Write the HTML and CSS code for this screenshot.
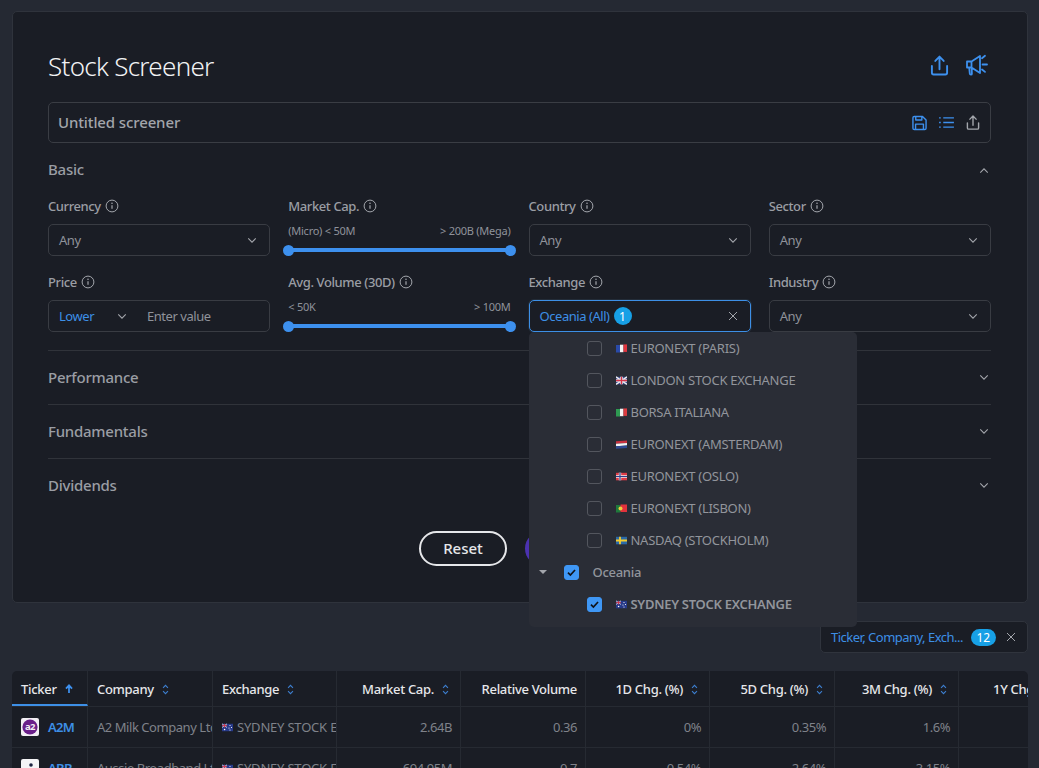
FILE: index.html
```html
<!DOCTYPE html>
<html lang="en">
<head>
<meta charset="utf-8">
<title>Stock Screener</title>
<link rel="stylesheet" href="styles.css">
</head>
<body>
<svg class="defs" width="0" height="0" aria-hidden="true">
  <symbol id="info" viewBox="0 0 14 14"><circle cx="7" cy="7" r="5.9" fill="none" stroke="currentColor" stroke-width="1"/><path d="M7 6.2v3.6" stroke="currentColor" stroke-width="1.2" fill="none"/><circle cx="7" cy="4.3" r=".8" fill="currentColor"/></symbol>
  <symbol id="down" viewBox="0 0 12 8"><path d="M1.500 1.500 6 6l4.500-4.500" fill="none" stroke="currentColor" stroke-width="1.300"/></symbol>
  <symbol id="up" viewBox="0 0 12 8"><path d="M1.500 6.500 6 2l4.500 4.500" fill="none" stroke="currentColor" stroke-width="1.300"/></symbol>
  <symbol id="close" viewBox="0 0 10 10"><path d="M1 1l8 8M9 1 1 9" fill="none" stroke="currentColor" stroke-width="1"/></symbol>
  <symbol id="share" viewBox="0 0 20 22"><path d="M2 11.500v7.200c0 1 .8 1.800 1.800 1.800h12.400c1 0 1.800-.8 1.800-1.800v-7.200M10 15V2M5.600 6.200 10 1.600l4.400 4.600" fill="none" stroke="currentColor" stroke-width="2" stroke-linecap="round" stroke-linejoin="round"/></symbol>
  <symbol id="horn" viewBox="0 0 22 22"><path d="M1 7.500h4.500v6H1zM5.500 7.500 14 2v17l-8.500-5.500zM3.200 13.500l.6 6.200c.1 1.300 2.100 1.300 2.100 0l-.2-5.800M16 4.200l3-2.400M16.500 10.500H21M16 15.500l3 2.400" fill="none" stroke="currentColor" stroke-width="1.800" stroke-linecap="round" stroke-linejoin="round"/></symbol>
  <symbol id="save" viewBox="0 0 16 16"><path d="M1 2.500C1 1.700 1.700 1 2.500 1h8.700L15 4.800v8.700c0 .8-.7 1.500-1.500 1.500h-11C1.700 15 1 14.300 1 13.500zM4 1v3.800h6.500V1M3.800 15V9.200h8.400V15" fill="none" stroke="currentColor" stroke-width="1.500" stroke-linejoin="round"/></symbol>
  <symbol id="list" viewBox="0 0 16 14"><path d="M4.500 2H16M4.500 7H16M4.500 12H16M0 2h1.800M0 7h1.800M0 12h1.800" fill="none" stroke="currentColor" stroke-width="1.500"/></symbol>
  <symbol id="sort" viewBox="0 0 8 12"><path d="M1.200 4.200 4 1.200l2.800 3M1.200 7.800 4 10.800l2.800-3" fill="none" stroke="currentColor" stroke-width="1.200"/></symbol>
  <symbol id="arrow" viewBox="0 0 10 12"><path d="M5 11V2M1.200 5.500 5 1.500l3.800 4" fill="none" stroke="currentColor" stroke-width="2.200"/></symbol>
  <symbol id="check" viewBox="0 0 14 14"><path d="M3.200 7.200 5.800 9.800 10.800 4.300" fill="none" stroke="currentColor" stroke-width="1.800"/></symbol>
  <symbol id="f-fr" viewBox="0 0 11 9"><path fill="#2a4aa8" d="M0 1h4v7.500H0z"/><path fill="#f4f4f4" d="M4 .7h3.500v7.500H4z"/><path fill="#e1353f" d="M7.500.4H11v7.500H7.500z"/></symbol>
  <symbol id="f-uk" viewBox="0 0 11 9"><path fill="#3a4c94" d="M0 .8h11v7.500H0z"/><path d="M0 .8l11 7.500M11 .8 0 8.300" stroke="#eee" stroke-width="1.500"/><path d="M5.500.8v7.500M0 4.500h11" stroke="#eee" stroke-width="2.600"/><path d="M5.500.8v7.500M0 4.500h11" stroke="#d3344a" stroke-width="1.300"/></symbol>
  <symbol id="f-it" viewBox="0 0 11 9"><path fill="#2e9a52" d="M0 1h4v7.500H0z"/><path fill="#f4f4f4" d="M4 .7h3.500v7.500H4z"/><path fill="#dc3b40" d="M7.500.4H11v7.500H7.500z"/></symbol>
  <symbol id="f-nl" viewBox="0 0 11 9"><path fill="#c8303f" d="M0 1.300 11 .4v2.700L0 3.800z"/><path fill="#f4f4f4" d="M0 3.800 11 3.100v2.500L0 6.300z"/><path fill="#2e4a94" d="M0 6.300 11 5.600v2.500L0 8.800z"/></symbol>
  <symbol id="f-no" viewBox="0 0 11 9"><path fill="#dc3b46" d="M0 .8h11v7.500H0z"/><path d="M4 .8v7.500M0 4.500h11" stroke="#eee" stroke-width="2.400"/><path d="M4 .8v7.500M0 4.500h11" stroke="#2c3f8c" stroke-width="1.200"/></symbol>
  <symbol id="f-pt" viewBox="0 0 11 9"><path fill="#1f7a3c" d="M0 1h4.500v7.500H0z"/><path fill="#e2323c" d="M4.500.5H11v7.500H4.500z"/><circle cx="4.500" cy="4.500" r="2" fill="#f1cd3e"/></symbol>
  <symbol id="f-se" viewBox="0 0 11 9"><path fill="#2a69a8" d="M0 .8h11v7.500H0z"/><path d="M4 .8v7.500M0 4.500h11" stroke="#f2cb2e" stroke-width="1.800"/></symbol>
  <symbol id="f-au" viewBox="0 0 11 9"><path fill="#273a8a" d="M0 .8h11v7.500H0z"/><path d="M0 .8l5 3.700M5 .8 0 4.500" stroke="#e9e9ee" stroke-width=".8"/><path d="M2.500.8v3.700M0 2.650h5" stroke="#d3344a" stroke-width=".9"/><circle cx="2.600" cy="6.500" r=".8" fill="#fff"/><circle cx="8" cy="2.500" r=".6" fill="#fff"/><circle cx="9.500" cy="4.500" r=".6" fill="#fff"/><circle cx="7" cy="5" r=".6" fill="#fff"/><circle cx="8" cy="7" r=".6" fill="#fff"/></symbol>
</svg>

<main class="card">
  <header class="title-row">
    <h1>Stock Screener</h1>
    <div class="title-actions">
      <svg class="ic-share-lg"><use href="#share"/></svg>
      <svg class="ic-horn"><use href="#horn"/></svg>
    </div>
  </header>

  <div class="name-bar">
    <span class="name-text">Untitled screener</span>
    <div class="name-actions">
      <svg class="ic-save"><use href="#save"/></svg>
      <svg class="ic-list"><use href="#list"/></svg>
      <svg class="ic-share-sm"><use href="#share"/></svg>
    </div>
  </div>

  <section class="section-open">
    <div class="section-head">
      <h2>Basic</h2>
      <svg class="ic-chev"><use href="#up"/></svg>
    </div>
    <div class="filters">
      <div class="field">
        <label class="field-label">Currency <svg class="ic-info"><use href="#info"/></svg></label>
        <div class="select"><span>Any</span><svg class="ic-chev"><use href="#down"/></svg></div>
      </div>
      <div class="field">
        <label class="field-label">Market Cap. <svg class="ic-info"><use href="#info"/></svg></label>
        <div class="range-labels"><span>(Micro) &lt; 50M</span><span>&gt; 200B (Mega)</span></div>
        <div class="slider"><i class="thumb thumb-l"></i><i class="thumb thumb-r"></i></div>
      </div>
      <div class="field">
        <label class="field-label">Country <svg class="ic-info"><use href="#info"/></svg></label>
        <div class="select"><span>Any</span><svg class="ic-chev"><use href="#down"/></svg></div>
      </div>
      <div class="field">
        <label class="field-label">Sector <svg class="ic-info"><use href="#info"/></svg></label>
        <div class="select"><span>Any</span><svg class="ic-chev"><use href="#down"/></svg></div>
      </div>

      <div class="field">
        <label class="field-label">Price <svg class="ic-info"><use href="#info"/></svg></label>
        <div class="select price">
          <span class="blue lower">Lower</span><svg class="ic-chev"><use href="#down"/></svg>
          <span class="placeholder">Enter value</span>
        </div>
      </div>
      <div class="field">
        <label class="field-label">Avg. Volume (30D) <svg class="ic-info"><use href="#info"/></svg></label>
        <div class="range-labels"><span>&lt; 50K</span><span>&gt; 100M</span></div>
        <div class="slider"><i class="thumb thumb-l"></i><i class="thumb thumb-r"></i></div>
      </div>
      <div class="field exchange">
        <label class="field-label">Exchange <svg class="ic-info"><use href="#info"/></svg></label>
        <div class="select active">
          <span class="blue">Oceania (All)</span><b class="badge">1</b>
          <svg class="ic-close"><use href="#close"/></svg>
        </div>
        <div class="menu">
          <div class="opt"><i class="box"></i><svg class="flag"><use href="#f-fr"/></svg>EURONEXT (PARIS)</div>
          <div class="opt"><i class="box"></i><svg class="flag"><use href="#f-uk"/></svg>LONDON STOCK EXCHANGE</div>
          <div class="opt"><i class="box"></i><svg class="flag"><use href="#f-it"/></svg>BORSA ITALIANA</div>
          <div class="opt"><i class="box"></i><svg class="flag"><use href="#f-nl"/></svg>EURONEXT (AMSTERDAM)</div>
          <div class="opt"><i class="box"></i><svg class="flag"><use href="#f-no"/></svg>EURONEXT (OSLO)</div>
          <div class="opt"><i class="box"></i><svg class="flag"><use href="#f-pt"/></svg>EURONEXT (LISBON)</div>
          <div class="opt"><i class="box"></i><svg class="flag"><use href="#f-se"/></svg>NASDAQ (STOCKHOLM)</div>
          <div class="opt group"><i class="caret"></i><i class="box on"><svg><use href="#check"/></svg></i><span>Oceania</span></div>
          <div class="opt picked"><i class="box on"><svg><use href="#check"/></svg></i><svg class="flag"><use href="#f-au"/></svg>SYDNEY STOCK EXCHANGE</div>
        </div>
      </div>
      <div class="field">
        <label class="field-label">Industry <svg class="ic-info"><use href="#info"/></svg></label>
        <div class="select"><span>Any</span><svg class="ic-chev"><use href="#down"/></svg></div>
      </div>
    </div>
  </section>

  <section class="section-closed"><h2>Performance</h2><svg class="ic-chev"><use href="#down"/></svg></section>
  <section class="section-closed"><h2>Fundamentals</h2><svg class="ic-chev"><use href="#down"/></svg></section>
  <section class="section-closed last"><h2>Dividends</h2><svg class="ic-chev"><use href="#down"/></svg></section>

  <div class="buttons">
    <button class="btn-reset">Reset</button>
    <button class="btn-search">Search</button>
  </div>
</main>

<div class="columns-row">
  <div class="columns-select">
    <span class="blue">Ticker, Company, Exch...</span><b class="badge wide">12</b>
    <svg class="ic-close"><use href="#close"/></svg>
  </div>
</div>

<div class="table">
  <div class="tr head">
    <div class="th sorted">Ticker <svg class="ic-arrow"><use href="#arrow"/></svg></div>
    <div class="th">Company <svg class="ic-sort"><use href="#sort"/></svg></div>
    <div class="th">Exchange <svg class="ic-sort"><use href="#sort"/></svg></div>
    <div class="th num">Market Cap. <svg class="ic-sort"><use href="#sort"/></svg></div>
    <div class="th num">Relative Volume</div>
    <div class="th num">1D Chg. (%) <svg class="ic-sort"><use href="#sort"/></svg></div>
    <div class="th num">5D Chg. (%) <svg class="ic-sort"><use href="#sort"/></svg></div>
    <div class="th num">3M Chg. (%) <svg class="ic-sort"><use href="#sort"/></svg></div>
    <div class="th clip">1Y Chg. (%)</div>
  </div>
  <div class="tr">
    <div class="td ticker">
      <svg class="logo" viewBox="0 0 18 18"><rect width="18" height="18" rx="2" fill="#f2eef4"/><circle cx="9" cy="9" r="7.600" fill="#6a1f8a"/><text x="9" y="12.400" class="logo-text">a2</text></svg>
      <span class="blue sym">A2M</span>
    </div>
    <div class="td">A2 Milk Company Ltd</div>
    <div class="td exch"><svg class="flag"><use href="#f-au"/></svg>SYDNEY STOCK EXCHANGE</div>
    <div class="td num">2.64B</div>
    <div class="td num">0.36</div>
    <div class="td num">0%</div>
    <div class="td num">0.35%</div>
    <div class="td num">1.6%</div>
    <div class="td"></div>
  </div>
  <div class="tr">
    <div class="td ticker">
      <svg class="logo" viewBox="0 0 18 18"><rect width="18" height="18" rx="2" fill="#f4f4f6"/><circle cx="10" cy="6" r="1.800" fill="#1c2340"/></svg>
      <span class="blue sym">ABB</span>
    </div>
    <div class="td">Aussie Broadband Ltd</div>
    <div class="td exch"><svg class="flag"><use href="#f-au"/></svg>SYDNEY STOCK EXCHANGE</div>
    <div class="td num">694.95M</div>
    <div class="td num">0.7</div>
    <div class="td num">0.54%</div>
    <div class="td num">2.64%</div>
    <div class="td num">3.15%</div>
    <div class="td"></div>
  </div>
</div>
</body>
</html>
```

FILE: styles.css
```css
* { box-sizing: border-box; }
html, body { margin: 0; height: 768px; overflow: hidden; }
body {
  background: #252933;
  padding: 11px 11px 0 12px;
  font-family: "Noto Sans", "Open Sans", sans-serif;
  font-size: 14px;
  color: #8f929a;
}
.defs { position: absolute; }
svg { display: block; flex: none; }
.blue { color: #3d8fe6; }

.card {
  background: #1a1d25;
  border: 1px solid #2f333c;
  border-radius: 5px;
  padding: 0 36px 0 35px;
  height: 592px;
}
.title-row {
  display: flex;
  align-items: center;
  justify-content: space-between;
  height: 90px;
  padding-top: 18px;
}
h1 {
  margin: 0;
  font-size: 26px;
  font-weight: 300;
  letter-spacing: -.7px;
  color: #f1f2f4;
}
.title-actions { display: flex; align-items: center; gap: 17px; margin: 0 3px 2px 0; color: #3d90ee; }
.ic-share-lg { width: 19px; height: 21px; }
.ic-horn { width: 22px; height: 22px; }

.name-bar {
  display: flex;
  align-items: center;
  justify-content: space-between;
  height: 41px;
  border: 1px solid #3a3d44;
  border-radius: 5px;
  padding: 0 10px 0 9px;
}
.name-text { padding-bottom: 2px; font-size: 15px; font-weight: 500; letter-spacing: -.12px; color: #a2a5ab; }
.name-actions { display: flex; align-items: center; gap: 12px; color: #3d90ee; }
.ic-save { width: 15px; height: 16px; }
.ic-list { width: 15px; height: 13px; }
.ic-share-sm { width: 14px; height: 17px; color: #a3a6ac; }

h2 { margin: 0; padding-bottom: 2px; font-size: 15px; font-weight: 500; letter-spacing: -.25px; color: #9a9da4; }
.ic-chev { width: 10px; height: 7px; color: #a3a6ac; }
.section-head {
  display: flex;
  align-items: center;
  justify-content: space-between;
  height: 54px;
}
.section-head .ic-chev, .section-closed .ic-chev { margin-right: 2px; }

.filters {
  display: grid;
  grid-template-columns: repeat(4, 1fr);
  column-gap: 18px;
  row-gap: 11px;
}
.field { position: relative; height: 65px; }
.field-label {
  display: flex;
  align-items: center;
  gap: 4px;
  height: 18px;
  margin: 0 0 9px;
  font-size: 13px;
  font-weight: 500;
  letter-spacing: -.4px;
  color: #9a9da4;
}
.ic-info { width: 14px; height: 14px; color: #a3a6ac; }
.select {
  display: flex;
  align-items: center;
  justify-content: space-between;
  height: 32px;
  border: 1px solid #393c43;
  border-radius: 5px;
  padding: 0 12px 0 10px;
  font-size: 13px;
  letter-spacing: -.45px;
}
.select.price { justify-content: flex-start; }
.lower { width: 58px; }
.placeholder { margin-left: 20px; }
.select.active {
  position: relative;
  z-index: 6;
  justify-content: flex-start;
  gap: 4px;
  border-color: #3d8fe6;
  box-shadow: 0 0 0 1px #232c38;
}
.select.active .ic-close { margin-left: auto; }
.ic-close { width: 10px; height: 10px; color: #a3a6ac; }
.badge {
  display: inline-flex;
  align-items: center;
  justify-content: center;
  width: 18px;
  height: 18px;
  border-radius: 9px;
  background: #17a0e6;
  color: #fff;
  font-size: 12px;
  font-weight: 400;
  letter-spacing: 0;
}
.badge.wide { width: 25px; height: 17px; margin-left: 8px; }

.range-labels {
  display: flex;
  justify-content: space-between;
  font-size: 11px;
  letter-spacing: -.25px;
  line-height: 14px;
  margin-bottom: 5px;
  color: #8f929a;
}
.slider { position: relative; height: 4px; margin-top: 10px; background: #3d90ee; border-radius: 2px; }
.thumb {
  position: absolute;
  top: -3.500px;
  width: 11px;
  height: 11px;
  border-radius: 50%;
  background: #3d90ee;
}
.thumb-l { left: -5px; }
.thumb-r { right: -5px; }

.section-closed {
  display: flex;
  align-items: center;
  justify-content: space-between;
  height: 54px;
  border-top: 1px solid #30333a;
}
.section-open + .section-closed { margin-top: 12px; }
.buttons {
  display: flex;
  justify-content: center;
  gap: 18px;
  margin-top: 19px;
}
.btn-reset, .btn-search {
  height: 35px;
  padding: 0 0 2px;
  border-radius: 18px;
  font-family: inherit;
  font-size: 15px;
  font-weight: 500;
}
.btn-reset {
  width: 88px;
  background: transparent;
  border: 2px solid #e6e7ea;
  color: #e6e7ea;
}
.btn-search {
  width: 95px;
  border: 0;
  background: #4b32b0;
  color: #fff;
}

.menu {
  position: absolute;
  top: 59px;
  left: 0;
  z-index: 5;
  width: 328px;
  height: 295px;
  background: #2a2d36;
  border-radius: 5px;
  font-size: 13px;
  letter-spacing: -.28px;
  color: #92959c;
}
.opt {
  display: flex;
  align-items: center;
  height: 32px;
  padding-left: 58px;
  white-space: nowrap;
}
.box {
  flex: none;
  width: 15px;
  height: 15px;
  margin-right: 14px;
  border: 1px solid #53565e;
  border-radius: 3px;
}
.box.on { background: #3f97f5; border-color: #3f97f5; color: #10131a; }
.box.on svg { width: 13px; height: 13px; }
.flag { width: 11px; height: 9px; margin-right: 4px; }
.group { padding-left: 10px; font-size: 13px; font-weight: 500; }
.group .box { margin-right: 14px; }
.caret {
  width: 0;
  height: 0;
  margin-right: 17px;
  border: 4px solid transparent;
  border-top: 4px solid #a3a6ac;
  border-bottom: 0;
}
.picked { font-weight: 600; }

.columns-row { display: flex; justify-content: flex-end; margin-top: 18px; }
.columns-select {
  display: flex;
  align-items: center;
  width: 208px;
  height: 32px;
  background: #1a1d25;
  border: 1px solid #30343d;
  border-radius: 5px;
  padding: 0 11px 0 10px;
  font-size: 13px;
  letter-spacing: -.52px;
  white-space: nowrap;
}
.columns-select .ic-close { margin-left: auto; }

.table {
  margin-top: 18px;
  width: 1016px;
  background: #1a1d25;
  border-radius: 5px 5px 0 0;
  overflow: hidden;
}
.tr {
  display: grid;
  grid-template-columns: 76px 125px 124px 124px 125px 124px 125px 124px 124px;
  height: 41px;
  border-bottom: 1px solid #262a32;
}
.tr.head { height: 36px; }
.th, .td {
  display: flex;
  align-items: center;
  overflow: hidden;
  white-space: nowrap;
  border-right: 1px solid #262a32;
  padding-left: 9px;
}
.th {
  gap: 8px;
  padding-top: 1px;
  font-size: 13px;
  font-weight: 500;
  letter-spacing: -.3px;
  color: #e6e7ea;
}
.th.sorted { border-bottom: 2px solid #3d8fe6; padding-top: 2px; }
.td { font-size: 13px; letter-spacing: -.45px; color: #7f828a; }
.td.exch { letter-spacing: -.2px; }
.num { justify-content: flex-end; padding-right: 8px; padding-left: 0; }
.ic-sort { width: 7px; height: 11px; margin-right: 3px; color: #3d7fd0; }
.ic-arrow { width: 8px; height: 10px; color: #3d90ee; }
.clip { padding-left: 34px; border-right: 0; }
.ticker { gap: 9px; }
.logo { width: 18px; height: 18px; }
.logo-text { font-size: 9.500px; font-weight: 700; fill: #f2eef4; text-anchor: middle; font-family: "Noto Sans", sans-serif; }
.sym { font-size: 13px; font-weight: 600; letter-spacing: -.7px; }
```
